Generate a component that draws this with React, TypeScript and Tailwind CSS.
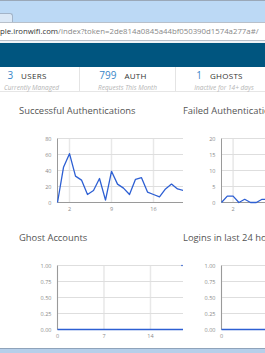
import React from "react";

type Tick = { i: number; label: string };

type ChartProps = {
  yLabels: string[];
  max: number;
  data: number[];
  step: number;
  xTicks: Tick[];
  dot?: boolean;
};

const successful = [0, 44, 61, 33, 28, 10, 15, 30, 3, 39, 23, 18, 10, 29, 31, 13, 10, 7, 17, 23, 17, 15, 12];
const failed = [0, 2, 2, 0, 1, 0, 0, 1, 1, 0, 0, 2, 1, 0, 0, 1, 0, 0, 1, 0, 0, 0];
const zeros = Array.from({ length: 20 }, () => 0);

const stats = [
  { value: "3", label: "USERS", sub: "Currently Managed" },
  { value: "799", label: "AUTH", sub: "Requests This Month" },
  { value: "1", label: "GHOSTS", sub: "Inactive for 14+ days" },
];

// small line chart, drawn the way the dashboard's chart lib renders it
function LineChart({ yLabels, max, data, step, xTicks, dot }: ChartProps) {
  const left = 38.5;
  const top = 6.5;
  const bottom = 70.5;
  const h = bottom - top;
  const width = 164;
  const last = yLabels.length - 1;
  const points = data
    .map((v, i) => `${left + i * step},${bottom - (v / max) * h}`)
    .join(" ");

  return (
    <svg width={width} height={80} className="block shrink-0 overflow-hidden">
      {xTicks.map((t) => (
        <line
          key={"v" + t.label}
          x1={left + t.i * step}
          x2={left + t.i * step}
          y1={top}
          y2={bottom}
          stroke="#e8e8e8"
          strokeWidth={1.5}
        />
      ))}
      {yLabels.map((l, k) => {
        const y = top + (k * h) / last;
        return (
          <g key={l}>
            <line
              x1={left}
              x2={width}
              y1={y}
              y2={y}
              stroke={k === last ? "#9a9a9a" : "#dedede"}
              strokeWidth={1}
            />
            <text
              x={left - 6}
              y={y + 2}
              textAnchor="end"
              fontSize="5.5"
              fill="#8a8a8a"
            >
              {l}
            </text>
          </g>
        );
      })}
      {xTicks.map((t) => (
        <text
          key={"t" + t.label}
          x={left + t.i * step}
          y={bottom + 8}
          textAnchor="middle"
          fontSize="5.5"
          fill="#8a8a8a"
        >
          {t.label}
        </text>
      ))}
      <line x1={left} x2={left} y1={top} y2={bottom} stroke="#9a9a9a" strokeWidth={1} />
      <polyline
        points={points}
        fill="none"
        stroke="#2d5fd3"
        strokeWidth={1.3}
        strokeLinejoin="round"
      />
      {dot && <circle cx={width - 1} cy={top} r={0.8} fill="#2d5fd3" />}
    </svg>
  );
}

function ChartBlock({ title, children }: { title: string; children: React.ReactNode }) {
  return (
    <div className="flex flex-col w-[164px]">
      <div className="h-[12px] leading-[12px] text-[9.4px] text-[#555] whitespace-nowrap">
        {title}
      </div>
      <div className="mt-[15px]">{children}</div>
    </div>
  );
}

export default function App() {
  const fracLabels = ["1.00", "0.75", "0.50", "0.25", "0.00"];

  return (
    <div
      className="w-[265px] h-[353px] overflow-hidden bg-white flex flex-col"
      style={{ fontFamily: '"Open Sans", "Noto Sans", sans-serif' }}
    >
      {/* browser chrome */}
      <div className="h-[22px] shrink-0 bg-[#bcd9f5] border-t border-[#9aa8b8] flex items-end">
        <div className="w-[13px] h-[9px] bg-[#dbe8f6] border-t border-r border-[#a3b4c8] rounded-tr-[3px]" />
      </div>
      <div className="h-[19px] shrink-0 bg-white border-y border-[#b8c0ca] flex items-center whitespace-nowrap overflow-hidden text-[7.8px] leading-none">
        <span className="text-[#333]">ple.ironwifi.com</span>
        <span className="text-[#888]">/index?token=2de814a0845a44bf050390d1574a277a#/</span>
      </div>
      <div className="h-[2px] shrink-0 bg-[#eef2f6]" />
      <div className="h-[24px] shrink-0 bg-[#00557f]" />

      {/* stats */}
      <div className="h-[25px] shrink-0 border-b border-[#e6e6e6] flex -ml-[16px]">
        {stats.map((s, i) => (
          <div
            key={s.label}
            className={`w-[96px] shrink-0 flex flex-col items-center pt-[2px] ${
              i < 2 ? "border-r border-[#e4e4e4]" : ""
            }`}
          >
            <div className="flex items-baseline gap-[8px] pr-[9px] leading-[12px] whitespace-nowrap">
              <span className="text-[10px] text-[#3a87c8]">{s.value}</span>
              <span className="text-[8px] text-[#333] tracking-[0.3px]">{s.label}</span>
            </div>
            <div className="mt-[1px] leading-[9px] text-[6.5px] italic text-[#b5b5b5] whitespace-nowrap">
              {s.sub}
            </div>
          </div>
        ))}
      </div>

      {/* charts */}
      <div className="flex-1 pl-[19px] pt-[13px] overflow-hidden">
        <div className="grid grid-cols-[164px_164px] gap-y-[20px]">
          <ChartBlock title="Successful Authentications">
            <LineChart
              yLabels={["80", "60", "40", "20", "0"]}
              max={80}
              data={successful}
              step={6}
              xTicks={[
                { i: 2, label: "2" },
                { i: 9, label: "9" },
                { i: 16, label: "16" },
              ]}
            />
          </ChartBlock>
          <ChartBlock title="Failed Authentications">
            <LineChart
              yLabels={["20", "15", "10", "5", "0"]}
              max={20}
              data={failed}
              step={5.8}
              xTicks={[
                { i: 2, label: "2" },
                { i: 9, label: "9" },
                { i: 16, label: "16" },
              ]}
            />
          </ChartBlock>
          <ChartBlock title="Ghost Accounts">
            <LineChart
              yLabels={fracLabels}
              max={1}
              data={zeros}
              step={6.64}
              xTicks={[
                { i: 0, label: "0" },
                { i: 7, label: "7" },
                { i: 14, label: "14" },
              ]}
              dot
            />
          </ChartBlock>
          <ChartBlock title="Logins in last 24 hours">
            <LineChart
              yLabels={fracLabels}
              max={1}
              data={zeros}
              step={6.64}
              xTicks={[
                { i: 0, label: "0" },
                { i: 7, label: "7" },
                { i: 14, label: "14" },
              ]}
            />
          </ChartBlock>
        </div>
      </div>

      {/* window frame bottom */}
      <div className="h-[5px] shrink-0 border-t border-[#8fa3ba] bg-[#b6cfea]" />
    </div>
  );
}
